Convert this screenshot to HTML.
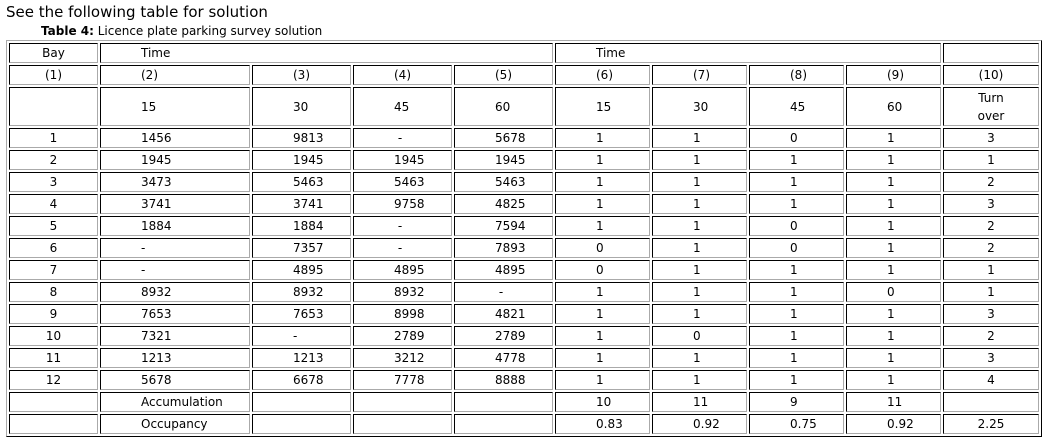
<!DOCTYPE html>
<html><head><meta charset="utf-8"><style>
body{margin:0;background:#fff;font-family:"DejaVu Sans","Liberation Sans",sans-serif;color:#000;}
.t{position:absolute;left:6px;top:2px;font-size:15px;line-height:20px;}
.c{position:absolute;left:41px;top:23px;font-size:12px;line-height:16px;}
table{position:absolute;left:6px;top:40px;width:1036px;table-layout:fixed;border-collapse:separate;border-spacing:2px;border:1px solid;border-color:#aaa #000 #000 #aaa;font-size:12px;}
td{border:1px solid;border-color:#000 #aaa #aaa #000;padding:0 0 0 40px;height:18px;line-height:18px;vertical-align:middle;white-space:nowrap;overflow:hidden;}
td.m{text-align:center;padding:0;}
tr.h td{height:37px;}
</style></head><body>
<div class="t">See the following table for solution</div>
<div class="c"><b>Table 4:</b> Licence plate parking survey solution</div>
<table>
<colgroup><col style="width:89px"><col style="width:150px"><col style="width:99px"><col style="width:99px"><col style="width:99px"><col style="width:95px"><col style="width:95px"><col style="width:95px"><col style="width:95px"><col style="width:96px"></colgroup>
<tr><td class="m">Bay</td><td colspan="4">Time</td><td colspan="4">Time</td><td class="m"></td></tr>
<tr><td class="m">(1)</td><td>(2)</td><td>(3)</td><td>(4)</td><td>(5)</td><td>(6)</td><td>(7)</td><td>(8)</td><td>(9)</td><td class="m">(10)</td></tr>
<tr class="h"><td class="m"></td><td>15</td><td>30</td><td>45</td><td>60</td><td>15</td><td>30</td><td>45</td><td>60</td><td class="m">Turn<br>over</td></tr>
<tr><td class="m">1</td><td>1456</td><td>9813</td><td>&nbsp;-</td><td>5678</td><td>1</td><td>1</td><td>0</td><td>1</td><td class="m">3</td></tr>
<tr><td class="m">2</td><td>1945</td><td>1945</td><td>1945</td><td>1945</td><td>1</td><td>1</td><td>1</td><td>1</td><td class="m">1</td></tr>
<tr><td class="m">3</td><td>3473</td><td>5463</td><td>5463</td><td>5463</td><td>1</td><td>1</td><td>1</td><td>1</td><td class="m">2</td></tr>
<tr><td class="m">4</td><td>3741</td><td>3741</td><td>9758</td><td>4825</td><td>1</td><td>1</td><td>1</td><td>1</td><td class="m">3</td></tr>
<tr><td class="m">5</td><td>1884</td><td>1884</td><td>&nbsp;-</td><td>7594</td><td>1</td><td>1</td><td>0</td><td>1</td><td class="m">2</td></tr>
<tr><td class="m">6</td><td>-</td><td>7357</td><td>&nbsp;-</td><td>7893</td><td>0</td><td>1</td><td>0</td><td>1</td><td class="m">2</td></tr>
<tr><td class="m">7</td><td>-</td><td>4895</td><td>4895</td><td>4895</td><td>0</td><td>1</td><td>1</td><td>1</td><td class="m">1</td></tr>
<tr><td class="m">8</td><td>8932</td><td>8932</td><td>8932</td><td>&nbsp;-</td><td>1</td><td>1</td><td>1</td><td>0</td><td class="m">1</td></tr>
<tr><td class="m">9</td><td>7653</td><td>7653</td><td>8998</td><td>4821</td><td>1</td><td>1</td><td>1</td><td>1</td><td class="m">3</td></tr>
<tr><td class="m">10</td><td>7321</td><td>-</td><td>2789</td><td>2789</td><td>1</td><td>0</td><td>1</td><td>1</td><td class="m">2</td></tr>
<tr><td class="m">11</td><td>1213</td><td>1213</td><td>3212</td><td>4778</td><td>1</td><td>1</td><td>1</td><td>1</td><td class="m">3</td></tr>
<tr><td class="m">12</td><td>5678</td><td>6678</td><td>7778</td><td>8888</td><td>1</td><td>1</td><td>1</td><td>1</td><td class="m">4</td></tr>
<tr><td class="m"></td><td>Accumulation</td><td></td><td></td><td></td><td>10</td><td>11</td><td>9</td><td>11</td><td class="m"></td></tr>
<tr><td class="m"></td><td>Occupancy</td><td></td><td></td><td></td><td>0.83</td><td>0.92</td><td>0.75</td><td>0.92</td><td class="m">2.25</td></tr>
</table>
</body></html>
